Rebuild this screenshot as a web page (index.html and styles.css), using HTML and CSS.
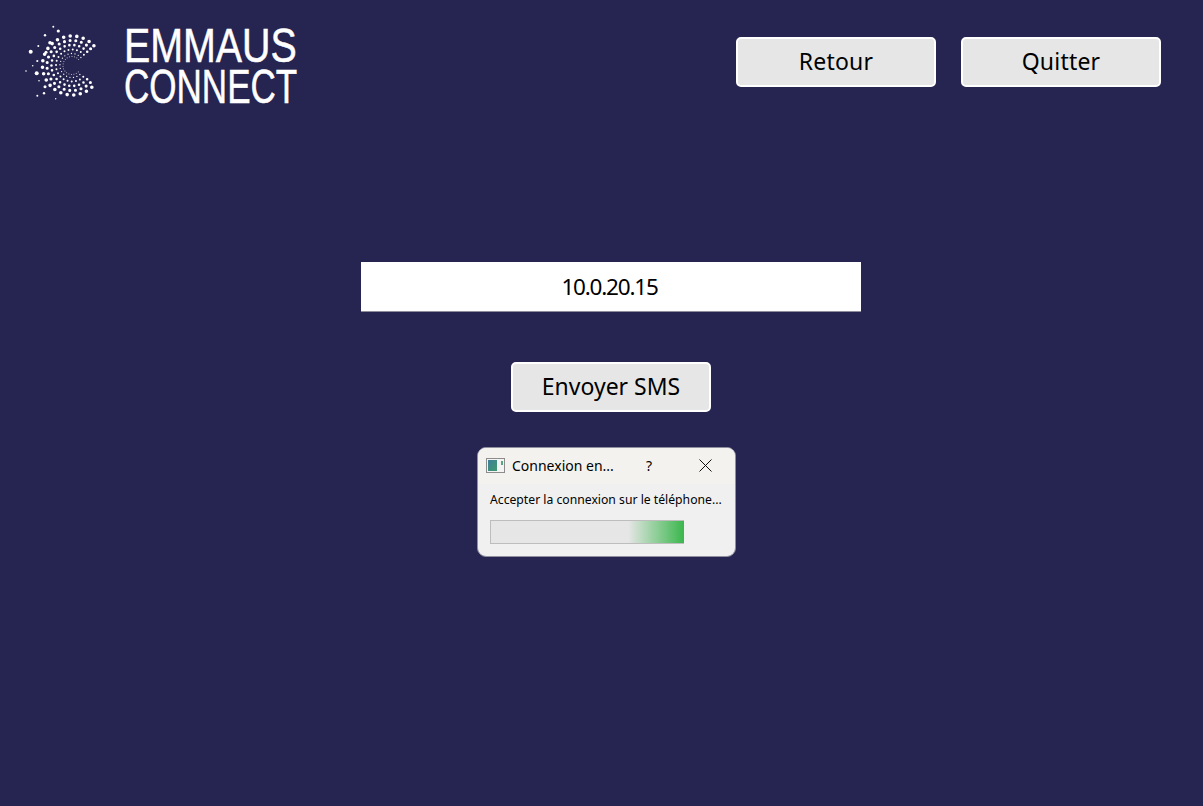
FILE: index.html
```html
<!doctype html>
<html>
    <head>
        <meta charset="utf-8">
        <title>Emmaus Connect</title>
        <link rel="stylesheet" href="styles.css">
    </head>
    <body>
        <header class="top-bar">
            <div class="logo">
                <!-- dotted C: rings of dots, bigger towards the outside -->
                <svg class="logo-mark" width="100" height="110" viewBox="0 0 100 110">
                    <g class="rings">
                        <path stroke-width="0.8" stroke-dasharray="0 2.5" d="M78.7 59.5A9 9 0 1 0 78.7 71.5"/>
                        <path stroke-width="1.3" stroke-dasharray="0 3.5" d="M80.9 57.5A12 12 0 1 0 80.9 73.5"/>
                        <path stroke-width="2" stroke-dasharray="0 4.2" d="M83.9 54.8A16 16 0 1 0 83.9 76.2"/>
                        <path stroke-width="2.6" stroke-dasharray="0 4.9" d="M87.2 51.8A20.5 20.5 0 1 0 87.2 79.2"/>
                        <path stroke-width="3.1" stroke-dasharray="0 5.7" d="M90.6 48.8A25 25 0 1 0 90.6 82.2"/>
                        <path stroke-width="3.6" stroke-dasharray="0 6.6" d="M93.9 45.8A29.5 29.5 0 1 0 93.9 85.2"/>
                    </g>
                    <g class="scatter">
                        <circle cx="53.3" cy="26.7" r="1"/>
                        <circle cx="58.3" cy="31" r="1.6"/>
                        <circle cx="45" cy="35.3" r="1.2"/>
                        <circle cx="50" cy="42.7" r="1.8"/>
                        <circle cx="38.3" cy="46" r="1"/>
                        <circle cx="30.7" cy="51.7" r="2"/>
                        <circle cx="46" cy="52.3" r="1.5"/>
                        <circle cx="37.3" cy="61" r="1.1"/>
                        <circle cx="32.7" cy="65.7" r="0.8"/>
                        <circle cx="26" cy="71" r="0.8"/>
                        <circle cx="36.7" cy="73.3" r="2"/>
                        <circle cx="39" cy="80.7" r="0.8"/>
                        <circle cx="45" cy="86.7" r="1.5"/>
                        <circle cx="44" cy="93.3" r="1.2"/>
                        <circle cx="37.3" cy="95.7" r="1"/>
                        <circle cx="55.7" cy="98.7" r="0.7"/>
                    </g>
                </svg>
                <div class="logo-text">
                    <div class="logo-line logo-line-top">EMMAUS</div>
                    <div class="logo-line logo-line-bottom">CONNECT</div>
                </div>
            </div>
            <div class="top-actions">
                <button class="btn">Retour</button>
                <button class="btn">Quitter</button>
            </div>
        </header>

        <main class="content">
            <div class="ip-field">10.0.20.15</div>
            <button class="btn btn-sms">Envoyer SMS</button>
        </main>

        <div class="dialog">
            <div class="dialog-title">
                <svg class="dialog-icon" width="19" height="15" viewBox="0 0 19 15">
                    <defs>
                        <linearGradient id="icon-fill" x1="0" y1="0" x2="1" y2="1">
                            <stop offset="0" stop-color="#3f7f9a"/>
                            <stop offset="1" stop-color="#3f9a6c"/>
                        </linearGradient>
                    </defs>
                    <rect x="0.5" y="0.5" width="18" height="14" fill="#f4f4f4" stroke="#8c8c8c"/>
                    <rect x="2" y="2" width="9" height="11" fill="url(#icon-fill)"/>
                    <rect x="15" y="3" width="2" height="4" fill="#5aa57f"/>
                </svg>
                <span class="dialog-name">Connexion en...</span>
                <span class="dialog-help">?</span>
                <svg class="dialog-close" width="13" height="13" viewBox="0 0 13 13">
                    <path d="M0.5 0.5L12.5 12.5M12.5 0.5L0.5 12.5"/>
                </svg>
            </div>
            <div class="dialog-body">
                <div class="dialog-text">Accepter la connexion sur le téléphone...</div>
                <div class="progress"></div>
            </div>
        </div>
    </body>
</html>
```

FILE: styles.css
```css
body {
    margin: 0;
    height: 806px;
    overflow: hidden;
    background: #262451;
    font-family: "Noto Sans", sans-serif;
    color: #000;
}

.top-bar {
    display: flex;
    justify-content: space-between;
    height: 125px;
    padding-right: 42px;
}
.logo { display: flex; }
.logo-mark { margin-right: 24px; }
.rings path {
    fill: none;
    stroke: #fff;
    stroke-linecap: round;
}
.scatter circle { fill: #fff; }
.logo-text {
    padding-top: 25px;
    font-family: "Liberation Sans", sans-serif;
    font-size: 48px;
    line-height: 41px;
    color: #fff;
}
/* the wordmark is a condensed face, none is installed */
.logo-line {
    transform-origin: left center;
    -webkit-text-stroke: 0.5px #fff;
}
.logo-line-top { transform: scaleX(0.82); }
.logo-line-bottom { transform: scaleX(0.73); }

.top-actions {
    display: flex;
    gap: 25px;
    padding-top: 37px;
}
.btn {
    width: 200px;
    height: 50px;
    padding: 0 0 3px;
    border: 2px solid #fff;
    border-radius: 5px;
    background: #e6e6e6;
    font-family: inherit;
    font-size: 23px;
    letter-spacing: 0.2px;
    color: #000;
}
.btn-sms { letter-spacing: 0; }

.content {
    display: flex;
    flex-direction: column;
    align-items: center;
    gap: 50px;
    padding-top: 137px;
    padding-left: 19px;
}
.ip-field {
    width: 500px;
    height: 50px;
    box-sizing: border-box;
    border-bottom: 1px solid #8d8d9c;
    background: #fff;
    font-size: 22.5px;
    line-height: 49px;
    letter-spacing: -1.2px;
    text-align: center;
    text-indent: -3px;
}

/* floating Windows dialog on top of the page */
.dialog {
    position: absolute;
    left: 477px;
    top: 447px;
    width: 257px;
    height: 108px;
    border: 1px solid #8f8f9f;
    border-radius: 9px;
    overflow: hidden;
    background: #f0f0f0;
}
.dialog-title {
    display: flex;
    align-items: center;
    height: 34px;
    padding-bottom: 2px;
    background: #f3f2ef;
}
.dialog-icon { margin-left: 8px; }
.dialog-name {
    width: 134px;
    margin-left: 7px;
    font-size: 14px;
}
.dialog-help { font-size: 14px; }
.dialog-close {
    margin-left: 47px;
    stroke: #111;
    stroke-width: 1;
}
.dialog-close path { fill: none; }
.dialog-body { padding: 7px 12px 0; }
.dialog-text {
    font-size: 12.2px;
    line-height: 17px;
    white-space: nowrap;
}
.progress {
    width: 193px;
    height: 22px;
    margin-top: 12px;
    border: 1px solid #bdbdbd;
    border-right: none;
    background: linear-gradient(90deg, rgba(58, 183, 76, 0) 137px, #3ab74c 100%), #e6e6e6;
}
```
